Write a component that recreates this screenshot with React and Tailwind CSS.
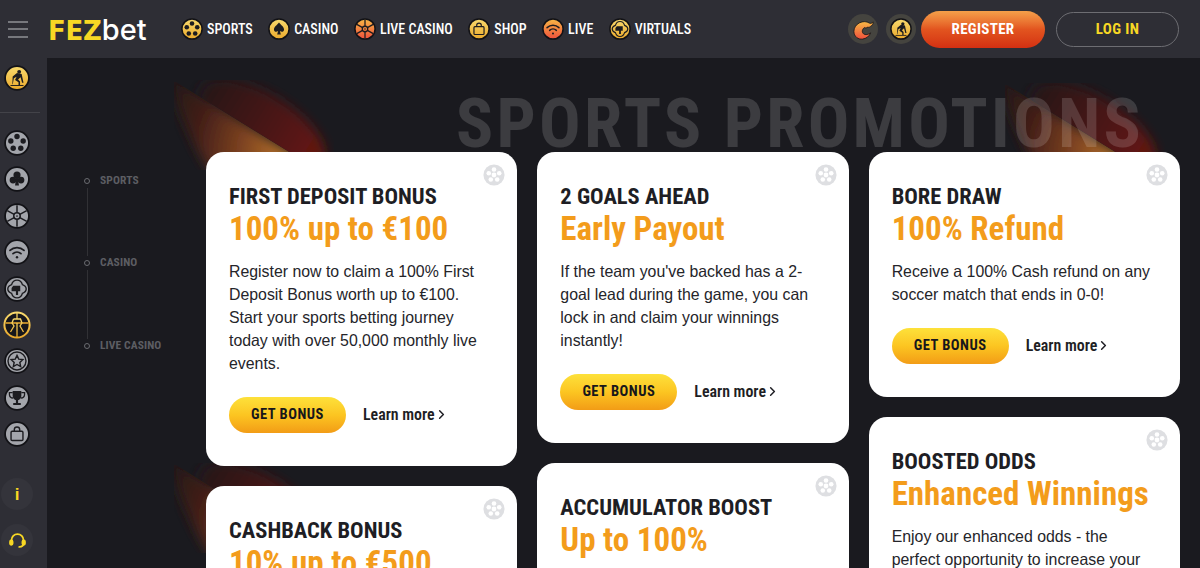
import { ChevronRight } from "lucide-react";

const din = "font-['Roboto_Condensed','Roboto',sans-serif]";
const arial = "font-['Liberation_Sans',Arial,sans-serif]";

const COLUMNS = [
  [
    {
      title: "First Deposit Bonus",
      sub: "100% up to €100",
      body: "Register now to claim a 100% First Deposit Bonus worth up to €100. Start your sports betting journey today with over 50,000 monthly live events.",
    },
    { title: "Cashback Bonus", sub: "10% up to €500" },
  ],
  [
    {
      title: "2 Goals Ahead",
      sub: "Early Payout",
      body: "If the team you've backed has a 2-goal lead during the game, you can lock in and claim your winnings instantly!",
    },
    { title: "Accumulator Boost", sub: "Up to 100%" },
  ],
  [
    {
      title: "Bore Draw",
      sub: "100% Refund",
      body: "Receive a 100% Cash refund on any soccer match that ends in 0-0!",
    },
    {
      title: "Boosted Odds",
      sub: "Enhanced Winnings",
      body: "Enjoy our enhanced odds - the perfect opportunity to increase your winnings.",
    },
  ],
];

const HOLES = [
  [12, 6],
  [17.7, 10.1],
  [15.5, 16.9],
  [8.5, 16.9],
  [6.3, 10.1],
];

function Reel({ ink }) {
  return HOLES.map(([x, y]) => <circle key={x + "" + y} cx={x} cy={y} r="2.5" fill={ink} />);
}

function Spade({ ink }) {
  return (
    <path fill={ink} d="M12 5c1.500 2.300 5.500 4.500 5.500 7.800 0 2.200-2.700 3-4.500 1.400l1 3.800H10l1-3.800c-1.800 1.600-4.500.8-4.500-1.400C6.500 9.500 10.500 7.300 12 5z" />
  );
}

function Club({ ink }) {
  return (
    <g fill={ink}>
      <circle cx="12" cy="8.400" r="3.300" />
      <circle cx="8.300" cy="13" r="3.100" />
      <circle cx="15.700" cy="13" r="3.100" />
      <path d="M11.200 11h1.600l1 7h-3.600z" />
    </g>
  );
}

function Wheel({ ink }) {
  return (
    <g stroke={ink} fill="none">
      <circle cx="12" cy="12" r="3" strokeWidth="1.400" />
      <circle cx="12" cy="12" r="0.800" fill={ink} stroke="none" />
      <path strokeWidth="1.400" d="M12 2v7M12 15v7M3 7l6.400 3.500M14.600 13.500L21 17M3 17l6.400-3.500M14.600 10.500L21 7" />
    </g>
  );
}

function Wifi({ ink }) {
  return (
    <g stroke={ink} fill="none" strokeWidth="1.600" strokeLinecap="round">
      <path d="M5.500 10.500a9.500 9.500 0 0 1 13 0" />
      <path d="M8.300 13.500a5.500 5.500 0 0 1 7.400 0" />
      <circle cx="12" cy="16.800" r="1.100" fill={ink} stroke="none" />
    </g>
  );
}

function Virtual({ ink }) {
  return (
    <g fill="none" stroke={ink} strokeWidth="1.300">
      <path d="M12 3.800c3 0 4.500 2.500 5 4.200 1.800.7 3.500 2.200 3.500 4s-1.700 3.300-3.500 4c-.5 1.700-2 4.200-5 4.200s-4.500-2.500-5-4.200c-1.800-.7-3.500-2.200-3.500-4s1.700-3.300 3.500-4c.5-1.700 2-4.200 5-4.200z" />
      <path fill={ink} stroke="none" d="M8.500 9h6.500v5h-2v3.500h-2V14H7v-3z" />
    </g>
  );
}

function Rider({ ink }) {
  return (
    <g fill={ink}>
      <circle cx="14" cy="6.300" r="1.800" />
      <path d="M8 10.500l4-3.200 4.300 1 1.700 8h-1.300l-1.400-5-2.300 2 1.800 2v3.200h-1.400v-2.500l-3.200-2.200 1.400-3-2.500 1.400-1 5.500H7.700z" />
      <path d="M6 18.500h12v.9H6z" />
    </g>
  );
}

function Star({ ink }) {
  return (
    <g stroke={ink} fill="none" strokeWidth="1.300">
      <circle cx="12" cy="12" r="8.300" />
      <path d="M12 6.800l1.600 3.500 3.800.4-2.800 2.600.8 3.800-3.400-1.900-3.400 1.900.8-3.800-2.800-2.600 3.800-.4z" />
    </g>
  );
}

function Trophy({ ink }) {
  return (
    <g fill={ink}>
      <path d="M8 5.500h8v4.500a4 4 0 0 1-8 0z" />
      <path d="M11 13.500h2v3h-2zM8.500 16.500h7v2h-7z" />
      <path d="M8 7H5v1.500c0 2 1.500 3.500 3.500 3.500M16 7h3v1.500c0 2-1.500 3.500-3.500 3.500" fill="none" stroke={ink} strokeWidth="1.200" />
    </g>
  );
}

function Bag({ ink }) {
  return (
    <g stroke={ink} strokeWidth="1.300" fill="none">
      <rect x="6.500" y="9.500" width="11" height="8.500" rx="1" />
      <path d="M9.500 9.500V8a2.500 2.500 0 0 1 5 0v1.500" />
    </g>
  );
}

function Disc({ fill, size = 22, children }) {
  return (
    <svg width={size} height={size} viewBox="0 0 24 24" className="shrink-0">
      <circle cx="12" cy="12" r="11" fill={fill} stroke="#121216" strokeWidth="1.600" />
      {children}
    </svg>
  );
}

function ActiveRider() {
  return (
    <svg width="28" height="28" viewBox="0 0 28 28" className="-my-px -ml-px shrink-0">
      <circle cx="14" cy="14" r="12.600" fill="#17171b" stroke="url(#gold)" strokeWidth="2" />
      <path d="M14 2v6M2.500 12h23" stroke="url(#gold)" strokeWidth="1.300" fill="none" />
      <path d="M10.500 8h7l1.500 4-2 3 3.500 6M10.500 8L9 12l2 3-3.500 6M14 12v14" stroke="url(#gold)" strokeWidth="1.300" fill="none" />
    </svg>
  );
}

function BallMark() {
  return (
    <svg width="22" height="22" viewBox="0 0 24 24" className="absolute right-[12px] top-[12px]">
      <circle cx="12" cy="12" r="11.500" fill="#dedfe2" />
      <circle cx="12" cy="12" r="2.600" fill="#fff" />
      <Reel ink="#ffffff" />
    </svg>
  );
}

function Swirl() {
  return (
    <svg width="23" height="23" viewBox="0 0 24 24">
      <path
        fill="url(#flame)"
        stroke="#121216"
        strokeWidth="0.800"
        d="M22 4c-1 1.500-2.500 2-3.500 1.500C12 1 2 6 2 14c0 5.500 4.500 8.500 9 8 4-.5 7-3 8.500-6.500-2.500 2-5.500 2.500-7.500 1-2-1.500-1.500-5 1-6.500 1 .5 2.500.5 3.500-.5 1 .5 2.500 0 3-1 1.500-.5 2.800-2.500 2.500-4.500z"
      />
    </svg>
  );
}

// streak from the top left corner down to the right: crisp along the diagonal, soft outside it
function Glow({ className }) {
  return (
    <svg viewBox="0 0 160 90" width="160" height="90" className={className}>
      <g clipPath="url(#belowEdge)">
        <path d="M-6 -6L130 81V110H52C24 80 6 40 -6 -6z" fill="url(#streakOrange)" filter="url(#soft)" />
      </g>
      <g clipPath="url(#aboveEdge)">
        <ellipse cx="88" cy="46" rx="72" ry="32" transform="rotate(32 88 46)" fill="url(#streakRed)" filter="url(#soft)" />
      </g>
    </svg>
  );
}

function NavItem({ label, icon }) {
  return (
    <div className="flex items-center gap-[4px]">
      {icon}
      <span className={`${din} text-[14px] font-medium leading-none text-white`}>{label}</span>
    </div>
  );
}

function Header() {
  return (
    <header className="flex h-[58px] shrink-0 items-center bg-[#2e2e35]">
      <div className="ml-[8px] flex w-[20px] flex-col gap-[5.500px]">
        <span className="h-[2px] bg-[#77787d]" />
        <span className="h-[2px] bg-[#77787d]" />
        <span className="h-[2px] bg-[#77787d]" />
      </div>
      <div className="ml-[20px] flex w-[100px] items-baseline leading-none">
        <span className="font-['DejaVu_Sans',sans-serif] text-[26px] font-bold tracking-[-0.2px] text-[#f8d824]">FEZ</span>
        <span className="font-['Inter',sans-serif] text-[29px] font-medium text-white">bet</span>
      </div>
      <nav className="ml-[33px] flex items-center gap-[15.500px]">
        <NavItem label="SPORTS" icon={<Disc fill="url(#gold)"><Reel ink="#1c1c20" /></Disc>} />
        <NavItem label="CASINO" icon={<Disc fill="url(#gold)"><Spade ink="#1c1c20" /></Disc>} />
        <NavItem label="LIVE CASINO" icon={<Disc fill="url(#flame)"><Wheel ink="#1c1c20" /></Disc>} />
        <NavItem label="SHOP" icon={<Disc fill="url(#gold)"><Bag ink="#1c1c20" /></Disc>} />
        <NavItem label="LIVE" icon={<Disc fill="url(#flame)"><Wifi ink="#1c1c20" /></Disc>} />
        <NavItem label="VIRTUALS" icon={<Disc fill="url(#gold)"><Virtual ink="#1c1c20" /></Disc>} />
      </nav>
      <div className="ml-auto mr-[21px] flex items-center">
        <div className="grid h-[30px] w-[30px] place-items-center rounded-full bg-[#45443f]">
          <Swirl />
        </div>
        <div className="ml-[8px] grid h-[30px] w-[30px] place-items-center rounded-full bg-[#45443f]">
          <Disc fill="url(#gold)"><Rider ink="#1c1c20" /></Disc>
        </div>
        <button className={`${din} ml-[5px] h-[37px] w-[124px] rounded-full bg-gradient-to-b from-[#f4a04a] via-[#e2541f] to-[#d32f12] text-[15px] font-bold tracking-[0.3px] text-white`}>
          REGISTER
        </button>
        <button className={`${din} ml-[11px] h-[35px] w-[123px] rounded-full border border-[#6d6d72] text-[15px] font-bold tracking-[0.4px] text-[#f8d824]`}>
          LOG IN
        </button>
      </div>
    </header>
  );
}

function Sidebar() {
  return (
    <aside className="flex w-[47px] shrink-0 flex-col bg-[#2e2e35] pb-[12px] pl-[4px] pt-[7px]">
      <Disc fill="url(#gold)" size={26}><Rider ink="#1c1c20" /></Disc>
      <div className="-ml-[4px] mt-[21px] h-px w-[40px] bg-white/10" />
      <div className="mt-[17px] flex flex-col gap-[10.400px]">
        <Disc fill="#a3a5ab" size={26}><Reel ink="#1c1c20" /></Disc>
        <Disc fill="#a3a5ab" size={26}><Club ink="#1c1c20" /></Disc>
        <Disc fill="#a3a5ab" size={26}><Wheel ink="#1c1c20" /></Disc>
        <Disc fill="#a3a5ab" size={26}><Wifi ink="#1c1c20" /></Disc>
        <Disc fill="#a3a5ab" size={26}><Virtual ink="#1c1c20" /></Disc>
        <ActiveRider />
        <Disc fill="#a3a5ab" size={26}><Star ink="#1c1c20" /></Disc>
        <Disc fill="#a3a5ab" size={26}><Trophy ink="#1c1c20" /></Disc>
        <Disc fill="#a3a5ab" size={26}><Bag ink="#1c1c20" /></Disc>
      </div>
      <div className="-ml-[3px] mt-auto flex flex-col gap-[14px]">
        <div className="grid h-[32px] w-[32px] place-items-center rounded-full bg-white/[0.03]">
          <span className={`${arial} text-[17px] font-bold leading-none text-[#f8d824]`}>i</span>
        </div>
        <div className="grid h-[32px] w-[32px] place-items-center rounded-full bg-white/[0.03]">
          <svg width="17" height="17" viewBox="0 0 24 24" fill="none" stroke="#f8d824" strokeWidth="2.600" strokeLinecap="round">
            <path d="M3.500 14v-2.500a8.500 8.500 0 0 1 17 0V16c0 3-2.500 5-6 5" />
            <rect x="1.500" y="12" width="3.500" height="6" rx="1.700" fill="#f8d824" />
            <rect x="19" y="12" width="3.500" height="6" rx="1.700" fill="#f8d824" />
          </svg>
        </div>
      </div>
    </aside>
  );
}

function SideLinks() {
  return (
    <div className="relative z-10 flex w-[159px] shrink-0 flex-col pl-[37px] pt-[21.500px]">
      {["SPORTS", "CASINO", "LIVE CASINO"].map((label, i) => (
        <div key={label}>
          {i > 0 && <div className="ml-[3px] h-[68.500px] w-px bg-white/10" />}
          <div className="flex h-[14px] items-center gap-[10px]">
            <span className="h-[6px] w-[6px] rounded-full border border-[#6a6b70]" />
            <span className={`${din} text-[11.500px] font-bold leading-none tracking-[0.1px] text-[#5d5e63]`}>{label}</span>
          </div>
        </div>
      ))}
    </div>
  );
}

function PromoCard({ title, sub, body }) {
  return (
    <div className="relative rounded-[18px] bg-white px-[23px] pb-[33px] pt-[31px]">
      <BallMark />
      <h3 className={`${din} text-[22.500px] font-bold uppercase leading-[26px] text-[#1e1e24]`}>{title}</h3>
      <p className={`${din} mt-[2px] text-[33px] font-bold leading-[36px] text-[#f39c1b]`}>{sub}</p>
      {body && (
        <>
          <p className={`${arial} mt-[13px] text-[15.870px] leading-[23px] text-[#25252a]`}>{body}</p>
          <div className="mt-[22px] flex items-center gap-[17px]">
            <button className={`${din} h-[36px] w-[117px] rounded-full bg-gradient-to-b from-[#fde13a] via-[#fcc521] to-[#f29c16] text-[14.500px] font-bold tracking-[0.5px] text-[#17171b]`}>
              GET BONUS
            </button>
            <span className={`${din} flex items-center text-[15.900px] font-semibold text-[#1e1e24]`}>
              Learn more <ChevronRight className="-ml-[1px]" size={15} strokeWidth={2.400} />
            </span>
          </div>
        </>
      )}
    </div>
  );
}

export default function App() {
  return (
    <div className="flex h-screen flex-col overflow-hidden bg-[#1a1a1f]">
      <svg className="absolute h-0 w-0">
        <defs>
          <linearGradient id="gold" x1="0" y1="0" x2="0" y2="1">
            <stop offset="0" stopColor="#f8da6e" />
            <stop offset="1" stopColor="#eaa92c" />
          </linearGradient>
          <linearGradient id="flame" x1="0" y1="0" x2="0" y2="1">
            <stop offset="0" stopColor="#f8b845" />
            <stop offset="1" stopColor="#f0503c" />
          </linearGradient>
          <radialGradient id="streakOrange" gradientUnits="userSpaceOnUse" cx="112" cy="72" r="134">
            <stop offset="0" stopColor="#b8742a" />
            <stop offset="0.35" stopColor="#7a4020" />
            <stop offset="0.7" stopColor="#3f1c18" />
            <stop offset="1" stopColor="#241818" />
          </radialGradient>
          <linearGradient id="streakRed" x1="0" y1="0" x2="1" y2="0">
            <stop offset="0" stopColor="#24141a" />
            <stop offset="1" stopColor="#6a1610" />
          </linearGradient>
          <filter id="soft" x="-30%" y="-30%" width="160%" height="160%">
            <feGaussianBlur stdDeviation="6" />
          </filter>
          <clipPath id="belowEdge">
            <path d="M2 2L130 81V90H0V2z" />
          </clipPath>
          <clipPath id="aboveEdge">
            <path d="M2 2L130 81V90H160V0H2z" />
          </clipPath>
        </defs>
      </svg>

      <Header />

      <div className="flex min-h-0 flex-1">
        <Sidebar />

        <main className="relative min-w-0 flex-1 overflow-hidden">
          {/* decoration behind the cards */}
          <Glow className="absolute left-[127px] top-[22px]" />
          <Glow className="absolute left-[958px] top-[25px]" />
          <Glow className="absolute left-[127px] top-[405px]" />

          <div className="relative flex h-[94px] items-end justify-end pr-[56px]">
            <h1 className={`${din} text-[69px] font-bold leading-[56px] tracking-[3.300px] text-white/15`}>
              SPORTS PROMOTIONS
            </h1>
          </div>

          <div className="relative flex">
            <SideLinks />
            <div className="flex w-[974px] gap-[20px]">
              {COLUMNS.map((cards, i) => (
                <div key={i} className="flex min-w-0 flex-1 flex-col gap-[20px]">
                  {cards.map((card) => (
                    <PromoCard key={card.title} {...card} />
                  ))}
                </div>
              ))}
            </div>
          </div>
        </main>
      </div>
    </div>
  );
}
